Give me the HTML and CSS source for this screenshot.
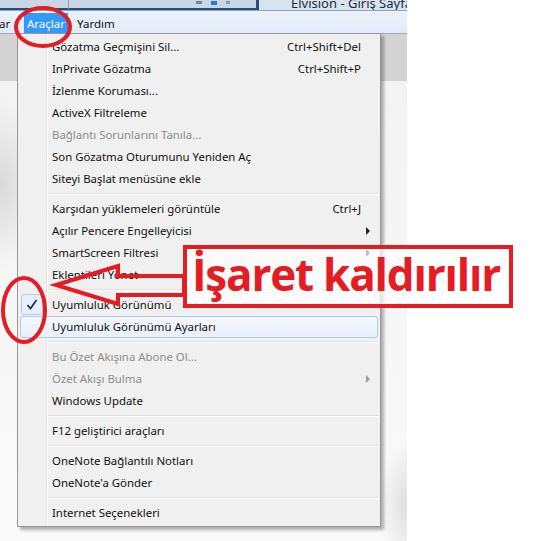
FILE: index.html
```html
<!DOCTYPE html>
<html lang="tr">
<head>
    <meta charset="UTF-8">
    <meta name="viewport" content="width=device-width, initial-scale=1.0">
    <title>Araçlar menüsü - Uyumluluk Görünümü</title>
    <link rel="stylesheet" href="styles.css">
</head>
<body>
    <div class="shot">
        <div class="titlebar">
            <div class="addr">
                <span class="addr-sep"></span>
                <span class="ctl ctl-min"></span>
                <span class="ctl ctl-blue"></span>
                <span class="ctl ctl-gray"></span>
            </div>
            <div class="tab"><span class="tab-icon"></span>Elvision - Giriş Sayfası</div>
        </div>

        <div class="menubar">
            <span class="mb-item mb-cut">ar</span>
            <span class="mb-item active">Araçlar</span>
            <span class="mb-item mb-help">Yardım</span>
        </div>

        <div class="page"></div>

        <!-- Araçlar açılır menüsü -->
        <div class="menu">
            <div class="item"><span>Gözatma Geçmişini Sil...</span><span class="key">Ctrl+Shift+Del</span></div>
            <div class="item"><span>InPrivate Gözatma</span><span class="key">Ctrl+Shift+P</span></div>
            <div class="item"><span>İzlenme Koruması...</span></div>
            <div class="item"><span>ActiveX Filtreleme</span></div>
            <div class="item disabled"><span>Bağlantı Sorunlarını Tanıla...</span></div>
            <div class="item"><span>Son Gözatma Oturumunu Yeniden Aç</span></div>
            <div class="item"><span>Siteyi Başlat menüsüne ekle</span></div>
            <div class="sep"></div>
            <div class="item"><span>Karşıdan yüklemeleri görüntüle</span><span class="key">Ctrl+J</span></div>
            <div class="item sub"><span>Açılır Pencere Engelleyicisi</span></div>
            <div class="item sub"><span>SmartScreen Filtresi</span></div>
            <div class="item"><span>Eklentileri Yönet</span></div>
            <div class="sep"></div>
            <div class="item checked"><span class="check">
                <svg width="12" height="11" viewBox="0 0 12 11"><path d="M1.5 6 L4.5 9.5 L10.5 1" fill="none" stroke="#1b2d6e" stroke-width="1.8"/></svg>
            </span><span>Uyumluluk Görünümü</span></div>
            <div class="item hover"><span>Uyumluluk Görünümü Ayarları</span></div>
            <div class="sep"></div>
            <div class="item disabled"><span>Bu Özet Akışına Abone Ol...</span></div>
            <div class="item disabled sub"><span>Özet Akışı Bulma</span></div>
            <div class="item"><span>Windows Update</span></div>
            <div class="sep"></div>
            <div class="item"><span>F12 geliştirici araçları</span></div>
            <div class="sep"></div>
            <div class="item"><span>OneNote Bağlantılı Notları</span></div>
            <div class="item"><span>OneNote'a Gönder</span></div>
            <div class="sep"></div>
            <div class="item"><span>Internet Seçenekleri</span></div>
        </div>
    </div>

    <!-- Kırmızı işaretler -->
    <div class="callout">İşaret kaldırılır</div>
    <svg class="marks" width="534" height="541" viewBox="0 0 534 541">
        <ellipse cx="43" cy="27" rx="27" ry="19" fill="none" stroke="#e41d25" stroke-width="4"/>
        <ellipse cx="24" cy="310" rx="21" ry="32" fill="none" stroke="#e41d25" stroke-width="4"/>
        <path d="M56 285 L118 266 L118 276 L184 276 L184 295 L118 295 L118 304 Z" fill="none" stroke="#e41d25" stroke-width="4" stroke-linejoin="miter"/>
    </svg>
</body>
</html>
```

FILE: styles.css
```css
body, html {
    margin: 0;
    padding: 0;
    background: #fff;
    font-family: "Noto Sans", "Open Sans", sans-serif;
}
.shot {
    position: relative;
    width: 407px;
    height: 541px;
    display: flex;
    flex-direction: column;
    overflow: hidden;
}
/* ust cubuk */
.titlebar {
    height: 11px;
    display: flex;
    background: #d8e3f0;
    border-bottom: 1px solid #8ea6c4;
    box-sizing: border-box;
}
.addr {
    width: 259px;
    display: flex;
    align-items: flex-start;
    background: #c9d6e6;
    border-right: 3px solid #2c4d78;
    border-bottom: 2px solid #2c4d78;
    box-sizing: border-box;
}
.addr-sep {
    width: 1px;
    height: 9px;
    margin-left: 68px;
    margin-right: 127px;
    background: #8a9bb2;
}
.ctl {
    height: 3px;
    margin-top: 1px;
    margin-right: 9px;
}
.ctl-min { width: 6px; background: #7b8796; }
.ctl-blue { width: 6px; height: 4px; background: #2f74d0; }
.ctl-gray { width: 4px; background: #8e99a6; }
.tab {
    flex: 1;
    display: flex;
    align-items: flex-end;
    padding-left: 20px;
    font-size: 13px;
    line-height: 13px;
    height: 10px;
    overflow: hidden;
    color: #1e2a3a;
    white-space: nowrap;
}
.tab-icon {
    width: 1px;
    height: 5px;
    margin-right: 12px;
    margin-bottom: 3px;
    background: #333;
}
/* menu cubugu */
.menubar {
    height: 22px;
    display: flex;
    align-items: stretch;
    background: linear-gradient(#eaf1fa, #e2ebf7);
    border-bottom: 1px solid #a3a8af;
    font-size: 11.5px;
    color: #111;
}
.mb-item {
    display: flex;
    align-items: center;
    margin-top: 2px;
}
.mb-cut {
    width: 25px;
    margin-left: -1px;
}
.mb-item.active {
    width: 44px;
    justify-content: center;
    background: #3399ff;
    color: #fff;
}
.mb-help {
    padding-left: 9px;
}
.page {
    flex: 1;
    background:
        radial-gradient(ellipse 60px 120px at 0 150px, #d9d9d9, rgba(255,255,255,0) 70%),
        radial-gradient(ellipse 40px 90px at 407px 470px, #dedede, rgba(255,255,255,0) 70%),
        linear-gradient(#d3d3d3 0, #d3d3d3 47px, #f3f3f3 47px, #fafafa 100%);
}
/* acilir menu */
.menu {
    position: absolute;
    left: 17px;
    top: 33px;
    width: 364px;
    box-sizing: border-box;
    padding: 2px;
    border: 1px solid #979797;
    background:
        linear-gradient(to right, transparent 28px, #e2e3e3 28px, #e2e3e3 29px, #fff 29px, #fff 30px, transparent 30px),
        #f0f0f0;
    box-shadow: 3px 3px 3px rgba(0, 0, 0, 0.3);
    font-size: 11.4px;
    color: #111;
}
.item {
    position: relative;
    height: 22px;
    display: flex;
    align-items: center;
    justify-content: space-between;
    padding: 0 17px 2px 32px;
    box-sizing: border-box;
    white-space: nowrap;
}
.item.disabled {
    color: #8d8d8d;
}
.item.sub::after {
    content: "";
    position: absolute;
    right: 8px;
    top: 7px;
    border-left: 4px solid #222;
    border-top: 4px solid transparent;
    border-bottom: 4px solid transparent;
}
.item.disabled.sub::after {
    border-left-color: #9a9a9a;
}
.item.hover {
    border: 1px solid #aecbef;
    border-radius: 3px;
    padding-left: 31px;
    padding-bottom: 1px;
    background: linear-gradient(#f4f8fd, #e8f0fb);
}
.check {
    position: absolute;
    left: 1px;
    top: 0;
    width: 20px;
    height: 19px;
    display: flex;
    align-items: center;
    justify-content: center;
    border: 1px solid #aecbef;
    border-radius: 3px;
    background: #e6effa;
}
.key {
    color: #111;
}
.sep {
    height: 8px;
    margin-left: 28px;
    background: linear-gradient(transparent 3px, #e0e0e0 3px, #e0e0e0 4px, #fff 4px, #fff 5px, transparent 5px);
}
/* isaretler */
.callout {
    position: absolute;
    left: 183px;
    top: 245px;
    width: 330px;
    height: 63px;
    box-sizing: border-box;
    border: 4px solid #e41d25;
    background: rgba(255, 255, 255, 0.7);
    color: #e41d25;
    font-family: "Open Sans", sans-serif;
    font-weight: 700;
    font-size: 44px;
    line-height: 50px;
    padding-left: 5px;
    letter-spacing: -1.2px;
    white-space: nowrap;
}
.marks {
    position: absolute;
    left: 0;
    top: 0;
    pointer-events: none;
}
```
